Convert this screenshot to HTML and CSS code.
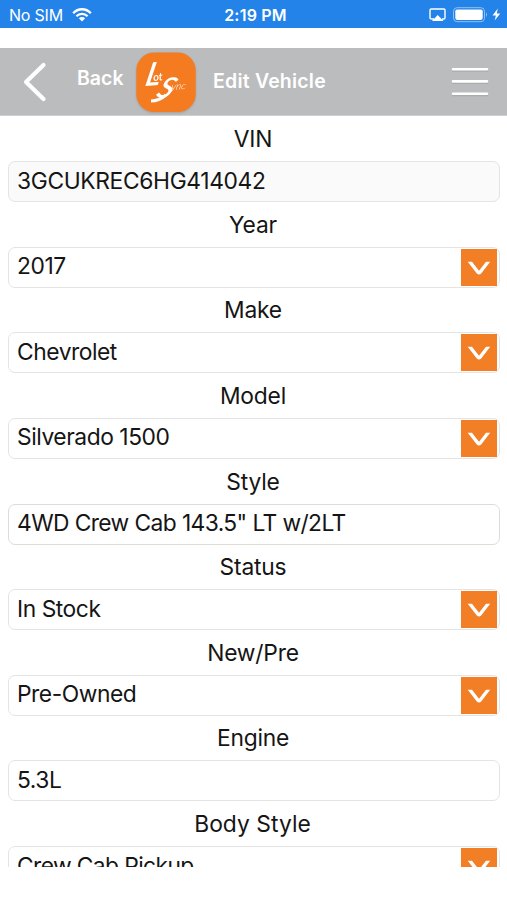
FILE: index.html
```html
<!DOCTYPE html>
<html lang="en">
<head>
<meta charset="utf-8">
<title>Edit Vehicle</title>
<link rel="stylesheet" href="styles.css">
</head>
<body>
<svg class="defs" aria-hidden="true"><symbol id="chevron" viewBox="0 0 36 36"><path d="M6.7 12.2H11L18 21.2L25 12.2H29.2L20.2 24Q18 26.2 15.8 24Z" fill="#fff"/></symbol></svg>
<div class="status">
  <div class="carrier"><span>No SIM</span>
    <svg width="20" height="14" viewBox="0 0 20 14" fill="none" stroke="#fff" stroke-width="2.3"><path d="M1.2 5.2C6-.1 14-.1 18.8 5.2M4.4 8.2C7.5 5 12.5 5 15.6 8.2"/><path d="M6.8 10.2Q10 7.6 13.2 10.2L10 13.5Z" fill="#fff" stroke="none"/></svg>
  </div>
  <span class="time">2:19 PM</span>
  <div class="power">
    <svg width="73" height="18" viewBox="0 0 73 18"><path d="M5 13H3.2Q1 13 1 11.8V4.2Q1 3 2.2 3H14.8Q16 3 16 4.2V11.8Q16 13 14.8 13H13" fill="none" stroke="#fff" stroke-width="1.4"/><path d="M8.7 9L14.5 15H3Z" fill="#fff"/><rect x="24.5" y="1.7" width="31" height="14" rx="3.6" fill="none" stroke="#91c0f4"/><rect x="26.3" y="3.5" width="27.4" height="10.4" rx="1.8" fill="#fff"/><path d="M57 6.3Q59 8.7 57 11" fill="#91c0f4"/><path d="M68.8 2.5L63.5 9.5H66.9L65.7 14.5L71.2 7.4H67.8Z" fill="#fff"/></svg>
  </div>
</div>
<header class="bar">
  <svg class="arrow" width="26" height="42" viewBox="0 0 26 42"><path d="M21.5 4L4 21L21.5 38" fill="none" stroke="#fff" stroke-width="4.2" stroke-linecap="round" stroke-linejoin="round"/></svg>
  <span class="back">Back</span>
  <svg class="logo" width="60" height="61" viewBox="0 0 60 61"><rect x=".3" y=".5" width="59.4" height="59.6" rx="18" fill="#f47b20"/><g fill="#fff" font-family="Lato, sans-serif" font-style="italic"><text transform="translate(8 34) rotate(-4) skewX(-16)" font-size="32">L</text><text transform="translate(17.5 29) rotate(-5)" font-size="11">ot</text><text transform="translate(19 45) rotate(4) skewX(-22)" font-size="29">S</text><text transform="translate(35 38) rotate(-4) skewX(-15)" font-size="10" font-weight="300">ync</text></g><path d="M15 49Q23 49 30 43" fill="none" stroke="#fff" stroke-width="3"/></svg>
  <h1>Edit Vehicle</h1>
  <svg class="menu" width="36" height="30" viewBox="0 0 36 30"><path d="M1 3.4H35M1 15.6H35M1 28H35" stroke="#999" stroke-opacity=".5" stroke-width="2.6" stroke-linecap="round"/><path d="M1 2.2H35M1 14.4H35M1 26.8H35" stroke="#fff" stroke-width="2.6" stroke-linecap="round"/></svg>
</header>
<main class="form">
  <div class="group"><label>VIN</label><div class="field disabled"><span class="vin">3GCUKREC6HG414042</span></div></div>
  <div class="group"><label>Year</label><div class="field"><span>2017</span><svg class="drop"><use href="#chevron"/></svg></div></div>
  <div class="group"><label>Make</label><div class="field"><span>Chevrolet</span><svg class="drop"><use href="#chevron"/></svg></div></div>
  <div class="group"><label>Model</label><div class="field"><span>Silverado 1500</span><svg class="drop"><use href="#chevron"/></svg></div></div>
  <div class="group"><label>Style</label><div class="field style"><span>4WD Crew Cab 143.5" LT w/2LT</span></div></div>
  <div class="group"><label>Status</label><div class="field"><span>In Stock</span><svg class="drop"><use href="#chevron"/></svg></div></div>
  <div class="group"><label>New/Pre</label><div class="field"><span>Pre-Owned</span><svg class="drop"><use href="#chevron"/></svg></div></div>
  <div class="group"><label>Engine</label><div class="field"><span>5.3L</span></div></div>
  <div class="group"><label class="wide">Body Style</label><div class="field last"><span>Crew Cab Pickup</span><svg class="drop"><use href="#chevron"/></svg></div></div>
</main>
</body>
</html>
```
FILE: styles.css
```css
* { box-sizing: border-box; }
body { margin: 0; height: 900px; overflow: hidden; background: #fff; color: #151515; font-family: Inter, "Liberation Sans", sans-serif; }
.defs { display: none; }
.status { display: grid; grid-template-columns: 1fr auto 1fr; align-items: center; height: 28px; padding: 2px 5px 0 9px; background: #2383e8; color: #fff; font-size: 16px; line-height: 24px; }
.carrier { display: flex; align-items: center; gap: 9px; letter-spacing: -0.2px; }
.time { font-weight: 600; letter-spacing: 0.2px; }
.power { display: flex; justify-content: flex-end; }
.bar { display: flex; align-items: center; height: 68px; margin-top: 20px; padding: 0 19px 0 22px; border-bottom: 1px solid #cdcecf; background: #bbbcbd; color: #fff; font-size: 19.5px; font-weight: 600; }
.back { margin: -7px 0 0 29px; width: 48px; white-space: nowrap; }
.logo { margin: 2px 0 0 11px; overflow: visible; filter: drop-shadow(0 1px 1px #8888); }
.bar h1 { margin: -1px 0 0 17px; font: inherit; letter-spacing: 0.2px; }
.menu { margin-left: auto; overflow: visible; }
.form { height: 751px; overflow: hidden; padding: 0 7px 0 8px; }
.group { height: 85.65px; }
.group label { display: block; height: 45px; padding-top: 7px; font-size: 22.8px; line-height: 32px; text-align: center; letter-spacing: -0.2px; padding-right: 2px; }
.group .wide { letter-spacing: 0.05px; padding-right: 3px; }
.field { display: flex; justify-content: space-between; align-items: center; height: 41px; padding: 0 2px 0 8px; border: 1.5px solid #e4e4e4; border-radius: 7px; font-size: 22.8px; line-height: 38px; letter-spacing: -0.45px; }
.field span { margin-top: -2px; white-space: nowrap; }
.field .vin { letter-spacing: -0.35px; }
.disabled { background: #fafafa; }
.style { border-color: #dddcd5; letter-spacing: -0.6px; }
.last { letter-spacing: -0.6px; }
.drop { width: 36px; height: 37px; background: #f27e26; }
```
